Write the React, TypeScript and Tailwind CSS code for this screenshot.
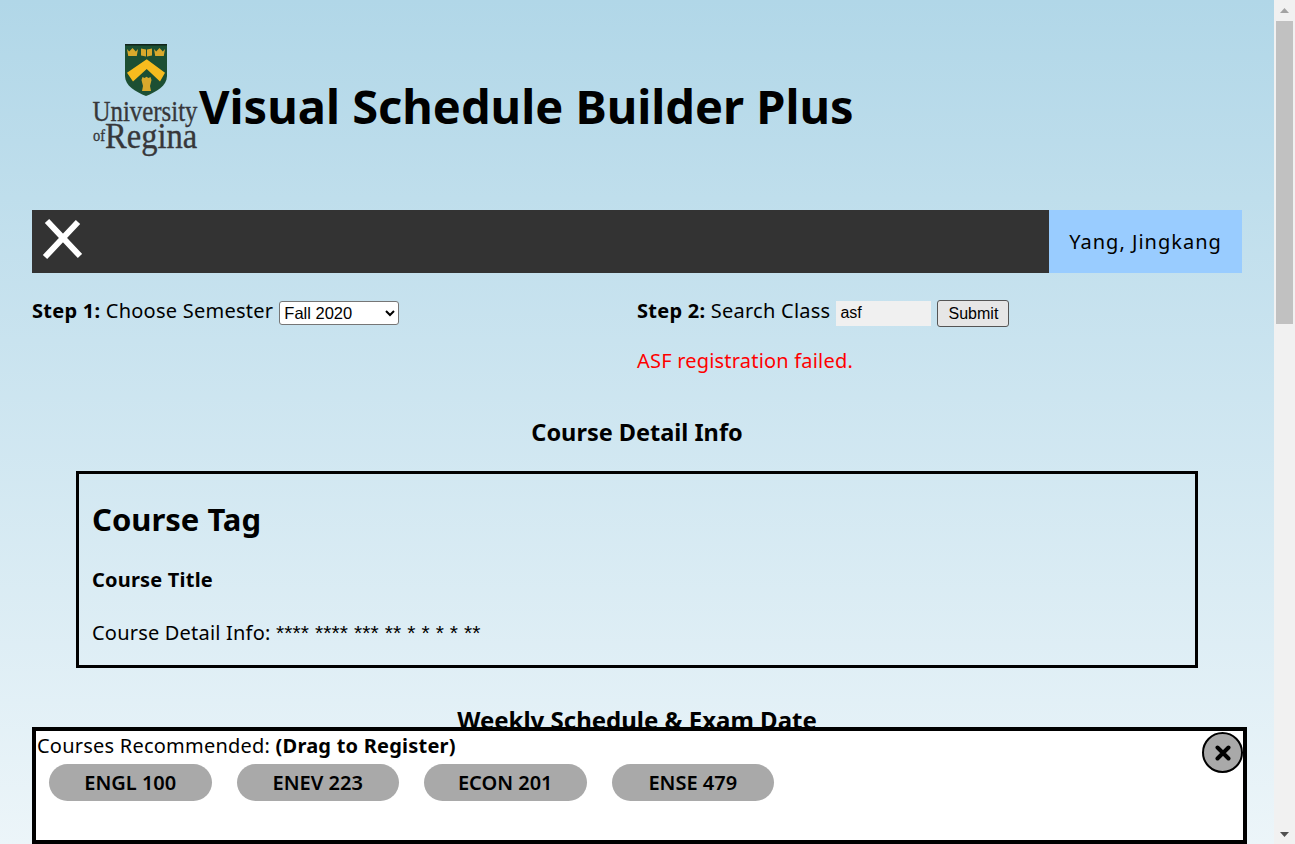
import React from "react";

function Logo() {
  return (
    <svg width="108" height="116" viewBox="0 0 108 116" className="shrink-0">
      <path d="M33 0H75V32C75 42 64 48 54 52C44 48 33 42 33 32Z" fill="#1c4f33" />
      <rect x="33" y="0" width="42" height="1.500" fill="#12241a" />
      <path d="M35 28.700L54.700 15.300L73 28.700L68 37.600L54.700 25L41 37.600Z" fill="#f7bb1e" />
      <g fill="#d9a92c">
        <path d="M35 5l2.200 2.500 3.300-3.500 3.300 3.500 2.200-2.500-1.200 7h-8.600z" />
        <path d="M62 5l2.200 2.500 3.300-3.500 3.300 3.500 2.200-2.500-1.200 7h-8.600z" />
        <path d="M49 4.500l5 1v7l-5-1zM60 4.500l-5 1v7l5-1z" />
        <path d="M50 47l1-5-1.500-6 1-3 2 1 2-1.300 2 1.300 2-1 1 3-1.500 6 1 5z" />
      </g>
      <g fill="#37373a" stroke="#37373a" strokeWidth="0.350" fontFamily="'Liberation Serif', serif">
        <text transform="translate(0.500 77) scale(0.858 1)" fontSize="29">University</text>
        <text transform="translate(1 97) scale(0.850 1)" fontSize="17">of</text>
        <text transform="translate(13 104) scale(0.930 1)" fontSize="35">Regina</text>
      </g>
    </svg>
  );
}

function Pill({ label }: { label: string }) {
  return (
    <div className="flex h-[37px] w-[162.500px] items-center justify-center rounded-[18.500px] bg-[#a9a9a9] text-[20px] font-semibold leading-none">
      {label}
    </div>
  );
}

export default function App() {
  return (
    <div className="flex h-[844px] overflow-hidden font-['Noto_Sans','Open_Sans',sans-serif] text-black">
      <div className="relative min-w-0 flex-1 overflow-hidden bg-gradient-to-b from-[#b1d7e8] to-[#ecf5f9] px-8">
        <header className="flex h-[210px] items-start pl-[60px] pt-[44px]">
          <div className="flex items-start">
            <Logo />
            <h1 className="ml-[-1px] mt-[35px] text-[47px] font-bold leading-[54px]">Visual Schedule Builder Plus</h1>
          </div>
        </header>

        <nav className="flex h-[63px] items-stretch bg-[#333333]">
          <div className="flex flex-1 items-center pl-[10px]">
            <svg width="40" height="42" viewBox="0 0 40 42" className="mb-[5px]">
              <path d="M3 39L36 4M5 3L38 38" stroke="#fff" strokeWidth="6" fill="none" />
            </svg>
          </div>
          <div className="flex w-[193px] items-center justify-center bg-[#99ccff] text-[20px] tracking-[1px]">Yang, Jingkang</div>
        </nav>

        <div className="mt-[25px] grid grid-cols-2">
          <div className="flex items-center gap-[6px] text-[20px] leading-[26px]">
            <span className="mb-[3px] tracking-[0.250px]"><b>Step 1:</b> Choose Semester</span>
            <select defaultValue="Fall 2020" className="h-[24px] w-[120px] rounded-[3px] border border-[#767676] bg-white font-['Liberation_Sans',sans-serif] text-[16.500px]">
              <option>Fall 2020</option>
            </select>
          </div>
          <div className="flex items-center text-[20px] leading-[26px]">
            <span className="mb-[3px] tracking-[0.250px]"><b>Step 2:</b> Search Class</span>
            <input readOnly value="asf" className="ml-[6px] mt-[1px] h-[25px] w-[95px] bg-[#f0f0f0] px-[4px] font-['Liberation_Sans',sans-serif] text-[16px] outline-none" />
            <button className="ml-[6px] mt-[1px] h-[27px] w-[72px] rounded-[3px] border border-[#555555] bg-[#e6e6e6] font-['Liberation_Sans',sans-serif] text-[16px]">Submit</button>
          </div>
        </div>

        <div className="grid grid-cols-2">
          <div />
          <p className="mt-[20px] text-[20px] leading-[27px] tracking-[0.200px] text-[#ff0000]">ASF registration failed.</p>
        </div>

        <h2 className="mt-[42px] text-center text-[23.500px] font-bold leading-[32px]">Course Detail Info</h2>

        <section className="mx-[44px] mt-[23px] h-[197px] border-[3px] border-black px-[13px]">
          <h3 className="mt-[23px] text-[31px] font-bold leading-[44px]">Course Tag</h3>
          <p className="mt-[25px] text-[20px] font-bold leading-[27px] tracking-[0.200px]">Course Title</p>
          <p className="mt-[26px] text-[20px] leading-[27px] tracking-[0.200px]">
            Course Detail Info: <span className="font-['Liberation_Sans',sans-serif] text-[21px] tracking-[0.100px]">**** **** *** ** * * * * **</span>
          </p>
        </section>

        <h2 className="mt-[36px] text-center text-[24px] font-bold leading-[32px]">Weekly Schedule &amp; Exam Date</h2>

        <aside className="absolute bottom-0 left-8 h-[117px] w-[1215px] border-4 border-black bg-white pl-[1px] pt-[1px]">
          <p className="text-[20px] leading-[27px] tracking-[0.220px]">Courses Recommended: <b>(Drag to Register)</b></p>
          <div className="mt-[5px] flex gap-[25px] pl-[12px]">
            <Pill label="ENGL 100" />
            <Pill label="ENEV 223" />
            <Pill label="ECON 201" />
            <Pill label="ENSE 479" />
          </div>
          <div className="absolute right-0 top-[1px] flex h-[41px] w-[41px] items-center justify-center rounded-full border-2 border-black bg-[#a9a9a9]">
            <svg width="16" height="16" viewBox="0 0 16 16">
              <path d="M2.500 2.500L13.500 13.500M13.500 2.500L2.500 13.500" stroke="#000" strokeWidth="4" strokeLinecap="round" />
            </svg>
          </div>
        </aside>
      </div>

      <div className="relative w-[21px] shrink-0 bg-[#f1f1f1]">
        <svg width="21" height="17" viewBox="0 0 21 17" className="absolute left-0 top-0">
          <path d="M6 13L10.500 8L15 13Z" fill="#a3a3a3" />
        </svg>
        <div className="absolute left-[2px] top-[21px] h-[303px] w-[17px] bg-[#c1c1c1]" />
        <svg width="21" height="17" viewBox="0 0 21 17" className="absolute bottom-0 left-0">
          <path d="M6 5L10.500 10L15 5Z" fill="#505050" />
        </svg>
      </div>
    </div>
  );
}
